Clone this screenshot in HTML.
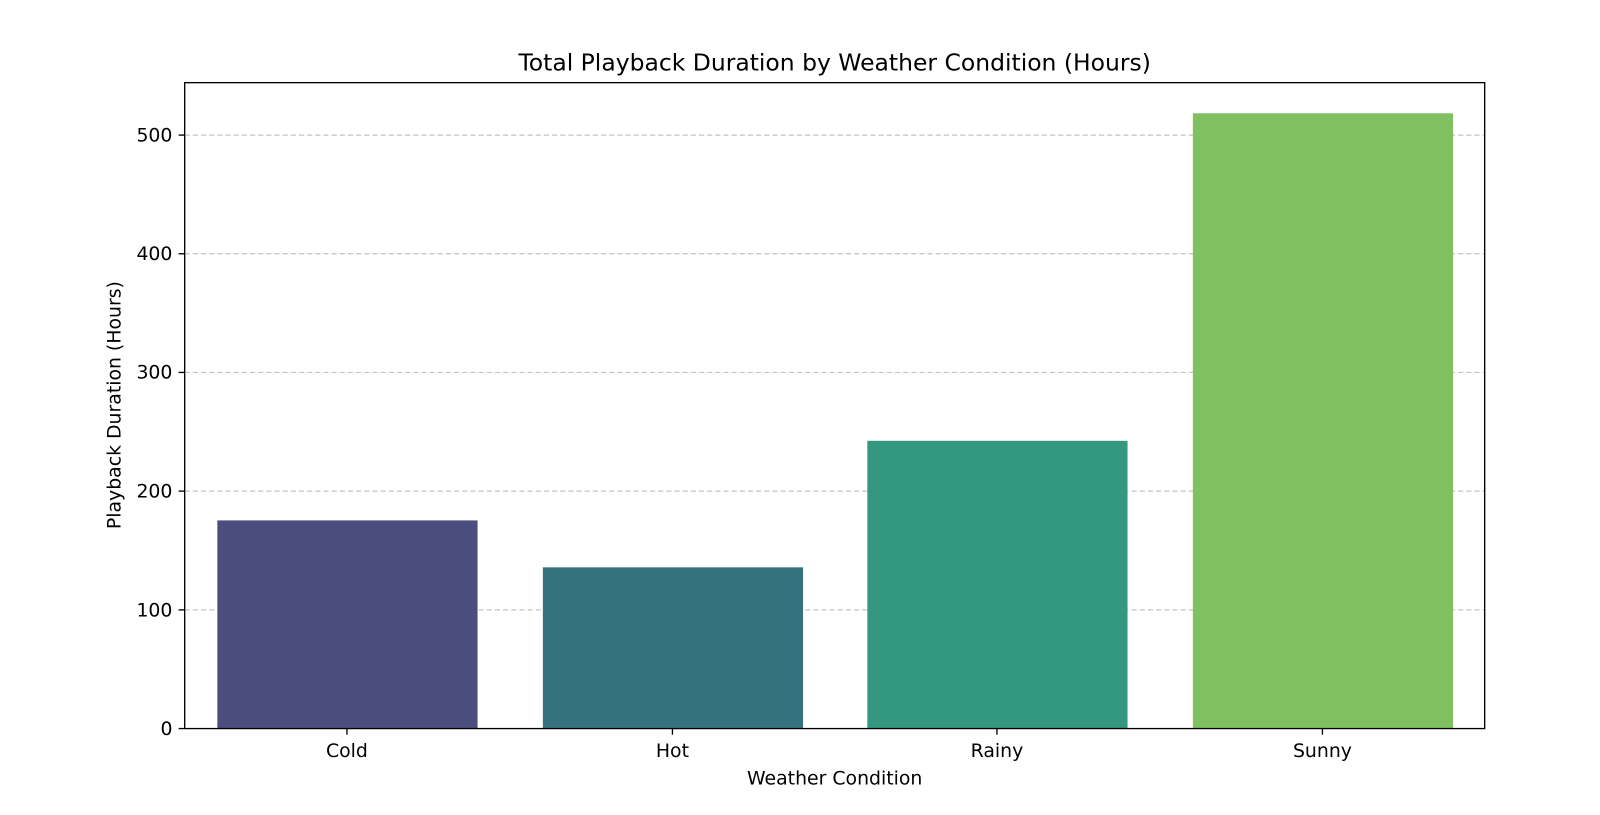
<!DOCTYPE html>
<html><head><meta charset="utf-8"><style>html,body{margin:0;padding:0;background:#fff;width:1600px;height:815px;overflow:hidden}svg{display:block}</style></head>
<body>
<svg width="1600" height="815" viewBox="0 0 1600 815" xmlns="http://www.w3.org/2000/svg" font-family="DejaVu Sans, Liberation Sans, sans-serif">
<rect width="1600" height="815" fill="#fff"/>
<g transform="scale(1.0204)">
<g stroke="#c4c4c4" stroke-width="1.2" stroke-dasharray="5,3">
<line x1="181" y1="597.7" x2="1455" y2="597.7"/>
<line x1="181" y1="481.3" x2="1455" y2="481.3"/>
<line x1="181" y1="365" x2="1455" y2="365"/>
<line x1="181" y1="248.7" x2="1455" y2="248.7"/>
<line x1="181" y1="132.4" x2="1455" y2="132.4"/>
</g>
<rect x="213" y="510" width="255" height="204" fill="#4a4d7d"/>
<rect x="532" y="556" width="255" height="158" fill="#357280"/>
<rect x="850" y="432" width="255" height="282" fill="#33987f"/>
<rect x="1169" y="111" width="255" height="603" fill="#7fc061"/>
<rect x="181" y="81" width="1274" height="633" fill="none" stroke="#000" stroke-width="1.3"/>
<g stroke="#000" stroke-width="1.3">
<line x1="175" y1="714" x2="181" y2="714"/><line x1="175" y1="597.7" x2="181" y2="597.7"/><line x1="175" y1="481.3" x2="181" y2="481.3"/><line x1="175" y1="365" x2="181" y2="365"/><line x1="175" y1="248.7" x2="181" y2="248.7"/><line x1="175" y1="132.4" x2="181" y2="132.4"/>
<line x1="340" y1="714" x2="340" y2="720"/><line x1="659" y1="714" x2="659" y2="720"/><line x1="977" y1="714" x2="977" y2="720"/><line x1="1296" y1="714" x2="1296" y2="720"/>
</g>
<g font-size="18.5" text-anchor="end" fill="#000">
<text x="169" y="720.5">0</text><text x="169" y="604">100</text><text x="169" y="487.5">200</text><text x="169" y="371">300</text><text x="169" y="255">400</text><text x="169" y="138.5">500</text>
</g>
<g font-size="18.5" text-anchor="middle" fill="#000">
<text x="340" y="742">Cold</text><text x="659" y="742">Hot</text><text x="977" y="742">Rainy</text><text x="1296" y="742">Sunny</text>
<text x="818" y="769">Weather Condition</text>
<text x="818" y="69" font-size="23">Total Playback Duration by Weather Condition (Hours)</text>
<text transform="translate(118,397) rotate(-90)">Playback Duration (Hours)</text>
</g>
</g>
</svg>
</body></html>
